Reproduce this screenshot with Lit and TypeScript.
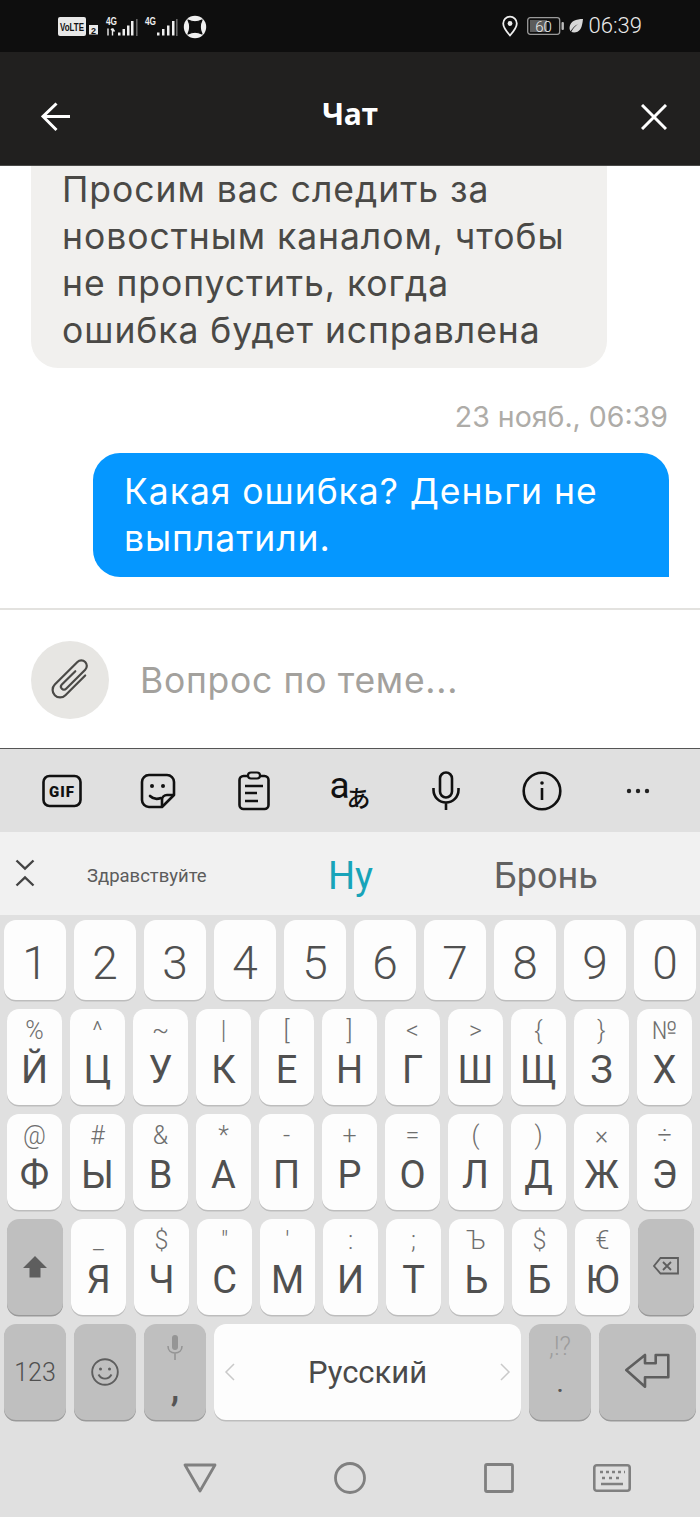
import { LitElement, html, css } from "lit";
import { customElement } from "lit/decorators.js";

type K = [string, string];
const row2: K[] = [["%","Й"],["^","Ц"],["~","У"],["|","К"],["[","Е"],["]","Н"],["<","Г"],[">","Ш"],["{","Щ"],["}","З"],["№","Х"]];
const row3: K[] = [["@","Ф"],["#","Ы"],["&","В"],["*","А"],["-","П"],["+","Р"],["=","О"],["(","Л"],[")","Д"],["×","Ж"],["÷","Э"]];
const row4: K[] = [["_","Я"],["$","Ч"],['"',"С"],["'","М"],[":","И"],[";","Т"],["Ъ","Ь"],["$","Б"],["€","Ю"]];

@customElement("app-root")
export class AppRoot extends LitElement {
  static styles = css`
    :host { display: block; width: 700px; height: 1517px; overflow: hidden; font-family: Roboto, "Liberation Sans", sans-serif; background: #fff; }
    .status { height: 52px; background: #0e0e0e; display: flex; align-items: center; padding: 0 58px; color: #eaeaea; box-sizing: border-box; }
    .status svg { display: block; flex: none; }
    .status .spacer { flex: 1; }
    .time { font-size: 22px; font-weight: 300; margin-left: 5px; line-height: 52px; }
    .header { height: 114px; background: #21201f; border-bottom: 1px solid #4a4a48; box-sizing: border-box; display: flex; align-items: center; justify-content: space-between; padding: 0 33px 0 41px; }
    .header svg { display: block; margin-top: 16px; }
    .title { font-family: "Open Sans", Roboto, sans-serif; font-size: 30px; font-weight: 700; color: #fff; line-height: 40px; margin: 10px 0 0 -12px; letter-spacing: -0.3px; }
    .chat { height: 442px; background: #fff; display: flex; flex-direction: column; font-family: Inter, sans-serif; }
    .in { width: 576px; margin-left: 31px; box-sizing: border-box; background: #f1f0ee; border-radius: 0 0 27px 27px; padding: 0 31px 14px; font-size: 35.5px; letter-spacing: 0.95px; line-height: 47px; color: #4a4946; }
    .stamp { font-size: 28.5px; line-height: 40px; color: #aeaca8; text-align: right; padding-right: 32px; margin-top: 29px; }
    .out { width: 576px; margin: 16px 0 0 93px; box-sizing: border-box; background: #0597ff; border-radius: 27px 27px 0 27px; padding: 15px 31px; font-size: 35.5px; letter-spacing: 0.95px; line-height: 47px; color: #fff; }
    .compose { height: 140px; border-top: 2px solid #e3e2df; box-sizing: border-box; display: flex; align-items: center; padding: 0 31px; gap: 31px; background: #fff; }
    .clip { width: 78px; height: 78px; border-radius: 50%; background: #e7e6e3; display: flex; align-items: center; justify-content: center; flex: none; margin-top: 2px; }
    .ph { font-family: Inter, sans-serif; font-size: 35.5px; letter-spacing: 0.7px; color: #a3a19d; margin-top: 2px; }
    .kb { background: #e0e0e0; height: 769px; border-top: 1px solid #555; box-sizing: border-box; }
    .tools { height: 83px; display: flex; align-items: center; padding-left: 14px; }
    .tool { width: 96px; height: 46px; display: flex; justify-content: center; align-items: center; margin-top: 1px; flex: none; color: #111; }
    .tr-a { font-size: 37px; line-height: 40px; margin-top: -10px; }
    .tr-b { font-family: "Noto Sans CJK JP", sans-serif; font-size: 24px; line-height: 30px; font-weight: 500; margin: 12px 0 0 -3px; }
    .cands { height: 83px; background: #f1f1f1; display: flex; align-items: center; padding-top: 5px; box-sizing: border-box; }
    .collapse { width: 87px; padding-left: 15px; box-sizing: border-box; flex: none; margin-top: -6px; }
    .c1 { font-size: 18.5px; color: #5c5c5c; width: 241px; flex: none; }
    .c2 { font-size: 38px; color: #18a4b9; width: 166px; flex: none; }
    .c3 { font-size: 36px; color: #616161; }
    .rows { display: flex; flex-direction: column; padding-top: 5px; gap: 9px; }
    .row { display: flex; }
    .r1 { gap: 8px; padding-left: 4px; height: 80px; }
    .rl { gap: 8px; padding-left: 7px; height: 96px; }
    .r5 { gap: 8px; padding-left: 4px; height: 96px; }
    .key { background: #fdfdfd; border-radius: 12px; box-shadow: 0 1.5px 0 #bdbdbd; display: flex; flex-direction: column; align-items: center; color: #505050; box-sizing: border-box; flex: none; }
    .dark { background: #bfbfbf; box-shadow: 0 1.5px 0 #999; justify-content: center; }
    .top { justify-content: flex-start; }
    .n { width: 62px; height: 80px; font-size: 46px; font-weight: 350; line-height: 86px; color: #505050; }
    .l { width: 55px; height: 96px; }
    .h { font-size: 25px; font-weight: 300; line-height: 30px; height: 30px; margin-top: 7px; color: #6e6e6e; }
    .m { font-size: 38px; line-height: 46px; margin-top: 1px; }
    .w62 { width: 62px; }
    .d56 { width: 56px; height: 96px; }
    .space { width: 307px; justify-content: space-between; flex-direction: row; padding: 0 10px; font-size: 31px; color: #4a4a4a; }
    .enter { width: 97px; }
    .num { font-size: 25px; font-weight: 300; }
    .comma { font-size: 38px; font-weight: 500; line-height: 30px; height: 26px; color: #555; margin-top: -8px; }
    .micwrap { height: 48px; margin-top: 8px; }
    .mic { display: block; margin-top: 3px; }
    .excl { font-size: 25px; font-weight: 300; line-height: 30px; height: 30px; color: #9c9c9c; margin-top: 8px; }
    .dot { font-size: 24px; line-height: 30px; font-weight: 500; color: #555; margin-top: 7px; }
    .nav { height: 97px; display: flex; align-items: center; padding: 18px 0 0 183px; box-sizing: border-box; }
    .nav svg { display: block; flex: none; }
    .nav .a { margin-left: 117px; }
    .nav .b { margin-left: 118px; }
    .nav .c { margin-left: 79px; }
    .mt2 { margin-top: -2px; }
    .mt3 { margin-top: -3px; }
    .pin { margin-right: 9px; }
    .leaf { margin-left: 3px; }
    .blk { display: block; }
  `;

  private hintKey(k: K) {
    return html`<div class="key l"><div class="h">${k[0]}</div><div class="m">${k[1]}</div></div>`;
  }

  render() {
    return html`
      <div class="status">
        <svg width="150" height="26" viewBox="0 0 150 26">
          <rect x="0" y="4" width="28" height="19" rx="2" fill="#e8e8e8"/>
          <text x="14" y="18" text-anchor="middle" font-family="Liberation Sans" font-size="11" font-weight="700" fill="#111" textLength="24" lengthAdjust="spacingAndGlyphs">VoLTE</text>
          <rect x="31" y="12" width="9" height="9.500" fill="#e8e8e8"/>
          <text x="35.500" y="20.500" text-anchor="middle" font-family="Liberation Sans" font-size="9" font-weight="700" fill="#111">2</text>
          <text x="48" y="12" font-family="Liberation Sans" font-size="11" font-weight="700" fill="#eee" textLength="11" lengthAdjust="spacingAndGlyphs">4G</text>
          <g stroke="#eee" stroke-width="1.400" fill="none"><path d="M50 15.500v7M54.500 15.500v7M53 17l1.500-1.500M54.500 15.500l2 3"/></g>
          <g fill="#eee"><rect x="60" y="19.500" width="2.500" height="3"/><rect x="64.500" y="16" width="2.500" height="6.500"/><rect x="69" y="12.500" width="2.500" height="10"/><rect x="73" y="8" width="2.500" height="14.500"/></g>
          <rect x="78" y="6" width="1.600" height="17" fill="#666"/>
          <text x="87" y="12" font-family="Liberation Sans" font-size="11" font-weight="700" fill="#eee" textLength="11" lengthAdjust="spacingAndGlyphs">4G</text>
          <g fill="#eee"><rect x="99" y="19.500" width="2.500" height="3"/><rect x="104" y="16" width="2.500" height="6.500"/><rect x="109" y="12.500" width="2.500" height="10"/><rect x="114" y="8" width="2.500" height="14.500"/></g>
          <rect x="118" y="6" width="1.600" height="17" fill="#666"/>
          <circle cx="137" cy="14" r="11.200" fill="#f0f0f0"/>
          <path d="M130 7 Q137 10.500 144 7 Q140.500 14 144 21 Q137 17.500 130 21 Q133.500 14 130 7Z" fill="#0e0e0e" stroke="#0e0e0e" stroke-linejoin="round" stroke-width="1.200"/>
        </svg>
        <div class="spacer"></div>
        <svg class="pin" width="16" height="22" viewBox="0 0 16 22">
          <path d="M8 20.500C4 16 1.200 12.500 1.200 8.500a6.800 6.800 0 0 1 13.600 0C14.800 12.500 12 16 8 20.500Z" fill="none" stroke="#eee" stroke-width="1.800"/><circle cx="8" cy="8.500" r="2.400" fill="#eee"/>
        </svg>
        <svg width="38" height="20" viewBox="0 0 38 20">
          <rect x="0.700" y="1.700" width="32" height="16.600" rx="2.500" fill="none" stroke="#9a9a9a" stroke-width="1.300"/>
          <rect x="3" y="4" width="17" height="12" fill="#5c5c5c"/>
          <text x="16.500" y="15.500" text-anchor="middle" font-family="Roboto" font-size="15" font-weight="300" fill="#eee">60</text>
          <rect x="34.500" y="6" width="2.400" height="8" rx="1" fill="#bbb"/>
        </svg>
        <svg class="leaf" width="16" height="16" viewBox="0 0 16 16">
          <path d="M15 1C8 1 2.500 3 1.600 9c-.3 2 .4 3.500 1 4.200C6 8 9 6.500 11 5.500 8 7.500 5 10 3.300 14c3 1 7 .5 9.200-3C14 8.500 14.500 5 15 1Z" fill="#d8d8d8"/>
        </svg>
        <div class="time">06:39</div>
      </div>

      <div class="header">
        <svg width="30" height="30" viewBox="0 0 30 30"><path d="M29 14.500H2M15.500 1.500 2 14.500l13.500 13.500" fill="none" stroke="#fff" stroke-width="3"/></svg>
        <div class="title">Чат</div>
        <svg width="26" height="26" viewBox="0 0 26 26"><path d="M1 1l24 24M25 1 1 25" fill="none" stroke="#fff" stroke-width="3"/></svg>
      </div>

      <div class="chat">
        <div class="in">Просим вас следить за<br>новостным каналом, чтобы<br>не пропустить, когда<br>ошибка будет исправлена</div>
        <div class="stamp">23 нояб., 06:39</div>
        <div class="out">Какая ошибка? Деньги не<br>выплатили.</div>
      </div>

      <div class="compose">
        <div class="clip">
          <svg width="46" height="46" viewBox="-23 -23 46 46"><g transform="rotate(45)"><path d="M7.500 -14V14a7.500 7.500 0 0 1-15 0V-18a5.500 5.500 0 0 1 11 0V9a3 3 0 0 1-6 0V-10" fill="none" stroke="#4b4a47" stroke-width="2.200" stroke-linecap="round"/></g></svg>
        </div>
        <div class="ph">Вопрос по теме...</div>
      </div>

      <div class="kb">
        <div class="tools">
          <div class="tool"><svg width="40" height="34" viewBox="0 0 40 34"><rect x="1.500" y="2" width="37" height="30" rx="6" fill="none" stroke="#111" stroke-width="2.600"/><text x="20" y="22.500" text-anchor="middle" font-family="Roboto" font-size="15" font-weight="900" fill="#111" letter-spacing="1">GIF</text></svg></div>
          <div class="tool"><svg width="36" height="36" viewBox="0 0 36 36"><path d="M22 34H9a7 7 0 0 1-7-7V9a7 7 0 0 1 7-7h18a7 7 0 0 1 7 7v13L22 34Z" fill="none" stroke="#111" stroke-width="2.600" stroke-linejoin="round"/><path d="M22 34v-7a5 5 0 0 1 5-5h7" fill="none" stroke="#111" stroke-width="2.600"/><circle cx="12" cy="13" r="2" fill="#111"/><circle cx="23" cy="13" r="2" fill="#111"/><path d="M10 23c3 3 7 3.500 11 2" fill="none" stroke="#111" stroke-width="2.600" stroke-linecap="round"/></svg></div>
          <div class="tool"><svg width="32" height="40" viewBox="0 0 32 40"><rect x="1.500" y="5" width="29" height="33" rx="4" fill="none" stroke="#111" stroke-width="2.600"/><rect x="10" y="1.500" width="12" height="6" rx="3" fill="#e0e0e0" stroke="#111" stroke-width="2.200"/><path d="M7 15h18M7 22h12M7 30h13" stroke="#111" stroke-width="2.600"/></svg></div>
          <div class="tool"><span class="tr-a">a</span><span class="tr-b">あ</span></div>
          <div class="tool"><svg width="28" height="40" viewBox="0 0 28 40"><rect x="8" y="1.500" width="12" height="25" rx="6" fill="none" stroke="#111" stroke-width="2.600"/><path d="M1.500 17v2a12.500 12.500 0 0 0 25 0v-2M14 32v7" fill="none" stroke="#111" stroke-width="2.600"/></svg></div>
          <div class="tool"><svg width="40" height="40" viewBox="0 0 40 40"><circle cx="20" cy="20" r="18.300" fill="none" stroke="#111" stroke-width="2.600"/><circle cx="20" cy="12" r="1.800" fill="#111"/><path d="M20 17v12" stroke="#111" stroke-width="2.600"/></svg></div>
          <div class="tool"><svg width="24" height="6" viewBox="0 0 24 6"><circle cx="3" cy="3" r="2.200" fill="#222"/><circle cx="12" cy="3" r="2.200" fill="#222"/><circle cx="21" cy="3" r="2.200" fill="#222"/></svg></div>
        </div>
        <div class="cands">
          <div class="collapse"><svg class="blk" width="20" height="28" viewBox="0 0 20 28"><path d="M1.500 1.500 10 9.500l8.500-8M1.500 26.500 10 18.500l8.500 8" fill="none" stroke="#444" stroke-width="2.400"/></svg></div>
          <div class="c1">Здравствуйте</div>
          <div class="c2">Ну</div>
          <div class="c3">Бронь</div>
        </div>
        <div class="rows">
          <div class="row r1">${"1234567890".split("").map((n) => html`<div class="key n">${n}</div>`)}</div>
          <div class="row rl">${row2.map((k) => this.hintKey(k))}</div>
          <div class="row rl">${row3.map((k) => this.hintKey(k))}</div>
          <div class="row rl">
            <div class="key dark d56"><svg width="24" height="22" viewBox="0 0 24 22"><path d="M12 0 24 12h-6.500v9.500h-11V12H0Z" fill="#5e5e5e"/></svg></div>
            ${row4.map((k) => this.hintKey(k))}
            <div class="key dark d56"><svg class="mt2" width="26" height="18" viewBox="0 0 26 18"><path d="M25 1v15.500H7.500L1 9l6.500-8Z" fill="none" stroke="#5e5e5e" stroke-width="1.800"/><path d="M10 5l8 8M18 5l-8 8" stroke="#5e5e5e" stroke-width="1.800"/></svg></div>
          </div>
          <div class="row r5">
            <div class="key dark w62 num">123</div>
            <div class="key dark w62"><svg width="28" height="28" viewBox="0 0 28 28"><circle cx="14" cy="14" r="12.800" fill="none" stroke="#5e5e5e" stroke-width="1.900"/><circle cx="9.500" cy="11" r="1.500" fill="#5e5e5e"/><circle cx="18.500" cy="11" r="1.500" fill="#5e5e5e"/><path d="M7.500 16.500c3 5.500 10 5.500 13 0" fill="none" stroke="#5e5e5e" stroke-width="1.900"/></svg></div>
            <div class="key dark w62 top">
              <div class="micwrap"><svg class="mic" width="16" height="26" viewBox="0 0 16 26"><rect x="5" y="0" width="6" height="15" rx="3" fill="#959595"/><path d="M1 11c0 4.500 3 7 7 7s7-2.500 7-7M8 18v7" fill="none" stroke="#959595" stroke-width="1.600"/></svg></div>
              <div class="comma">,</div>
            </div>
            <div class="key space">
              <svg width="12" height="18" viewBox="0 0 12 18"><path d="M10 1 2 9l8 8" fill="none" stroke="#c9c9c9" stroke-width="1.500"/></svg>
              <div>Русский</div>
              <svg width="12" height="18" viewBox="0 0 12 18"><path d="M2 1l8 8-8 8" fill="none" stroke="#c9c9c9" stroke-width="1.500"/></svg>
            </div>
            <div class="key dark w62 top">
              <div class="excl">,!?</div>
              <div class="dot">.</div>
            </div>
            <div class="key dark enter"><svg class="mt3" width="45" height="36" viewBox="0 0 45 36"><path d="M1.300 17 20 2v8.300h10.700V2h12.600v22.300H20v9.400Z" fill="none" stroke="#5e5e5e" stroke-width="2.600" stroke-linejoin="round"/></svg></div>
          </div>
        </div>
        <div class="nav">
          <svg width="34" height="30" viewBox="0 0 34 30"><path d="M2 2h30L17 28Z" fill="none" stroke="#808080" stroke-width="2.800" stroke-linejoin="round"/></svg>
          <svg class="a" width="32" height="32" viewBox="0 0 32 32"><circle cx="16" cy="16" r="14.500" fill="none" stroke="#808080" stroke-width="2.800"/></svg>
          <svg class="b" width="30" height="30" viewBox="0 0 30 30"><rect x="1.500" y="1.500" width="27" height="27" rx="1.500" fill="none" stroke="#808080" stroke-width="2.800"/></svg>
          <svg class="c" width="38" height="28" viewBox="0 0 38 28"><rect x="1.300" y="1.300" width="35.400" height="25.400" rx="2.500" fill="none" stroke="#808080" stroke-width="2.600"/><path d="M7 8h3M13 8h3M19 8h3M25 8h3M31 8h1M9 14h3M16 14h3M23 14h3M8 20h22" stroke="#808080" stroke-width="2.400"/></svg>
        </div>
      </div>
    `;
  }
}
